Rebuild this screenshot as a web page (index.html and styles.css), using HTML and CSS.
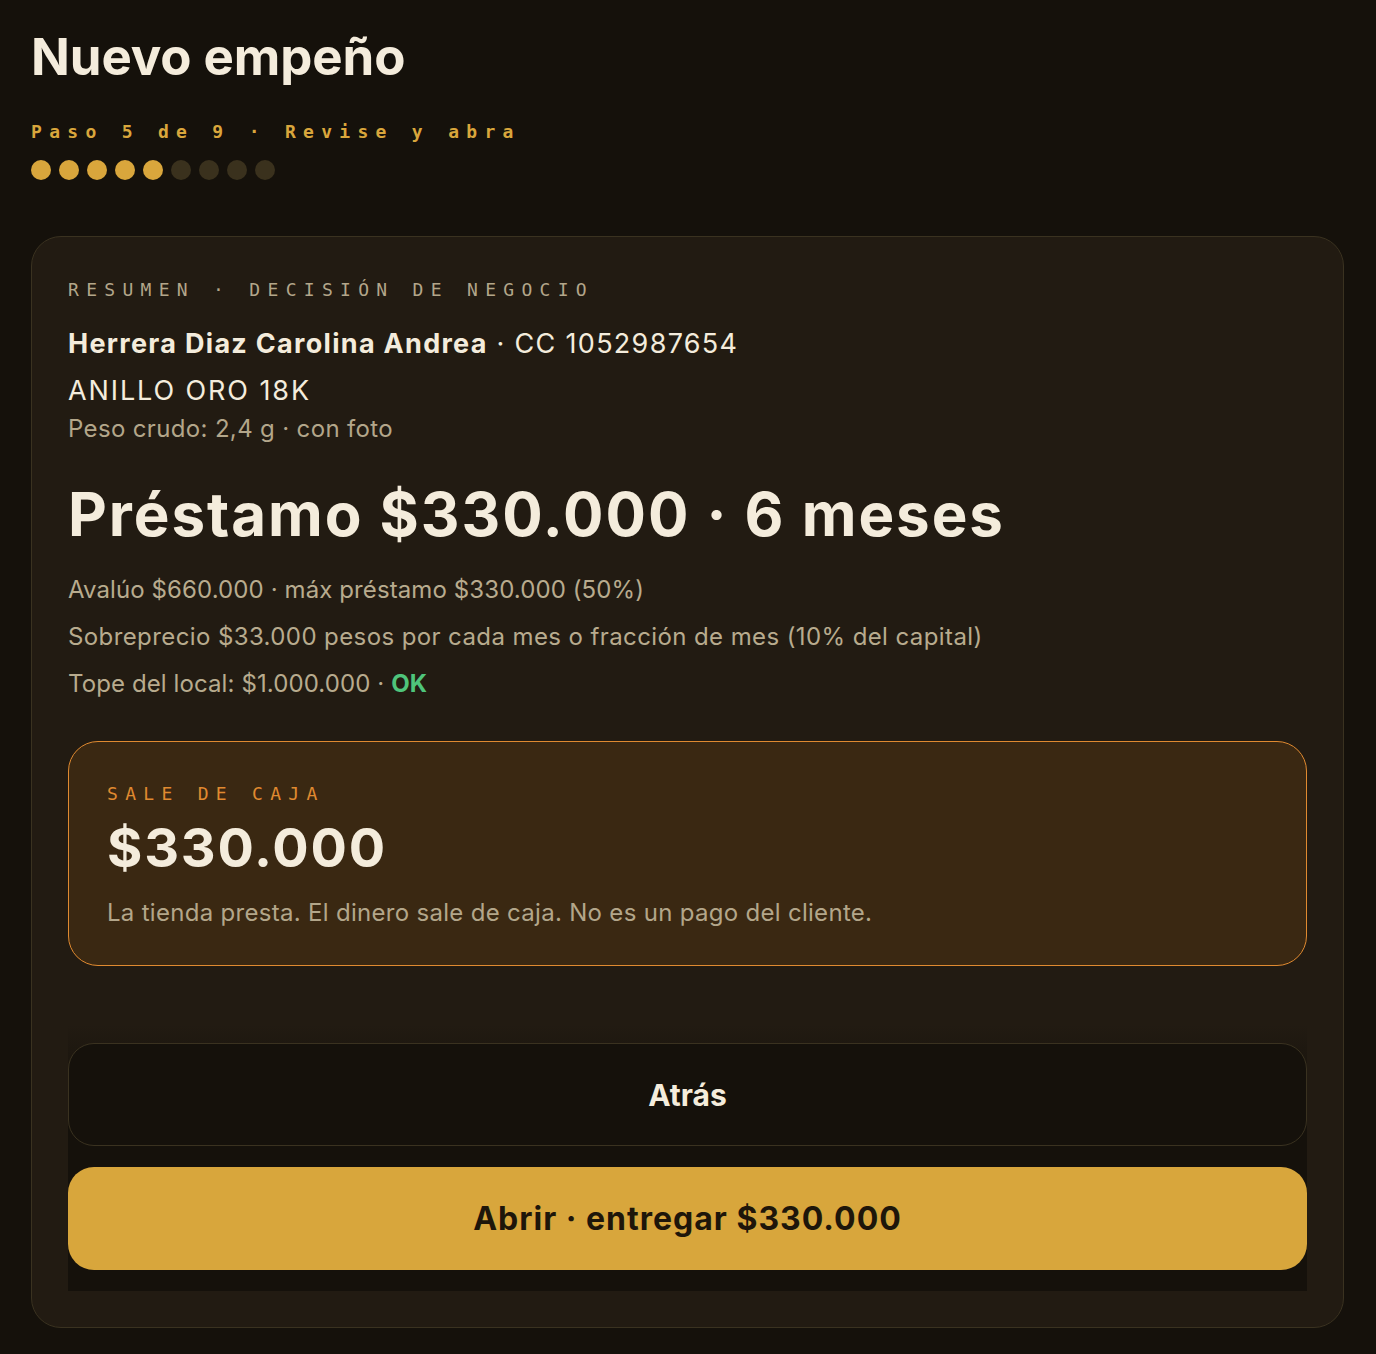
FILE: index.html
```html
<!DOCTYPE html>
<html lang="es">
<head>
<meta charset="utf-8">
<title>Nuevo empeño</title>
<link rel="stylesheet" href="styles.css">
</head>
<body>
<main class="page">
  <h1 class="title">Nuevo empeño</h1>
  <p class="step">Paso 5 de 9 · Revise y abra</p>
  <div class="dots">
    <span class="dot on"></span><span class="dot on"></span><span class="dot on"></span><span class="dot on"></span><span class="dot on"></span><span class="dot"></span><span class="dot"></span><span class="dot"></span><span class="dot"></span>
  </div>

  <section class="card">
    <p class="eyebrow">Resumen · Decisión de negocio</p>
    <p class="client"><strong>Herrera Diaz Carolina Andrea</strong> · CC 1052987654</p>
    <p class="item">ANILLO ORO 18K</p>
    <p class="meta">Peso crudo: 2,4 g · con foto</p>
    <h2 class="loan">Préstamo $330.000 · 6 meses</h2>
    <ul class="facts">
      <li>Avalúo $660.000 · máx préstamo $330.000 (50%)</li>
      <li class="wide">Sobreprecio $33.000 pesos por cada mes o fracción de mes (10% del capital)</li>
      <li>Tope del local: $1.000.000 · <span class="ok">OK</span></li>
    </ul>

    <div class="cash">
      <p class="cash-label">Sale de caja</p>
      <p class="cash-amount">$330.000</p>
      <p class="cash-note">La tienda presta. El dinero sale de caja. No es un pago del cliente.</p>
    </div>

    <div class="actions">
      <button class="btn btn-back" type="button">Atrás</button>
      <button class="btn btn-primary" type="button">Abrir · entregar $330.000</button>
    </div>
  </section>
</main>
</body>
</html>
```

FILE: styles.css
```css
* { box-sizing: border-box; }
html, body {
  margin: 0;
  padding: 0;
  background: #15110b;
}
body {
  font-family: Inter, Roboto, "Liberation Sans", sans-serif;
  color: #f4ecdc;
}
.page {
  padding: 28px 32px 26px 31px;
}
p, h1, h2, ul { margin: 0; padding: 0; }

.title {
  font-size: 51px;
  font-weight: 700;
  letter-spacing: -0.1px;
  line-height: 58px;
  color: #f4ecdc;
}
.step {
  margin-top: 34px;
  font-family: "DejaVu Sans Mono", "Liberation Mono", monospace;
  font-size: 18px;
  font-weight: 700;
  letter-spacing: 7.3px;
  color: #d9a63c;
  line-height: 24px;
}
.dots {
  display: flex;
  gap: 8px;
  margin-top: 16px;
}
.dot {
  width: 20px;
  height: 20px;
  border-radius: 50%;
  background: #3a311d;
}
.dot.on { background: #d9a63c; }

.card {
  margin-top: 56px;
  border: 1px solid #3a3220;
  border-radius: 30px;
  background: #221b12;
  padding: 38px 36px 36px 36px;
}
.eyebrow {
  font-family: "DejaVu Sans Mono", "Liberation Mono", monospace;
  font-size: 18px;
  letter-spacing: 7.3px;
  text-transform: uppercase;
  color: #b3a68a;
  line-height: 30px;
}
.client {
  margin-top: 22px;
  font-size: 27px;
  line-height: 34px;
  letter-spacing: 1.3px;
  color: #f4ecdc;
}
.client strong { font-weight: 700; }
.item {
  margin-top: 13px;
  font-size: 27px;
  line-height: 34px;
  letter-spacing: 1.9px;
}
.meta {
  margin-top: 5px;
  font-size: 24px;
  line-height: 32px;
  letter-spacing: 0.35px;
  color: #b3a68a;
}
.loan {
  margin-top: 27px;
  font-size: 60px;
  font-weight: 700;
  line-height: 84px;
  letter-spacing: 1.95px;
  color: #f4ecdc;
}
.facts {
  list-style: none;
  margin-top: 18px;
  display: flex;
  flex-direction: column;
  gap: 15px;
}
.facts li {
  font-size: 24px;
  line-height: 32px;
  letter-spacing: 0.1px;
  color: #b8ab8e;
}
.facts li.wide { letter-spacing: 0.4px; }
.ok { color: #4fc47b; font-weight: 700; }

.cash {
  margin-top: 41px;
  border: 1.5px solid #e08a30;
  border-radius: 30px;
  background: #3a2812;
  padding: 40px 38px 36px;
}
.cash-label {
  font-family: "DejaVu Sans Mono", "Liberation Mono", monospace;
  font-size: 18px;
  letter-spacing: 7.3px;
  text-transform: uppercase;
  color: #e08a30;
  line-height: 24px;
}
.cash-amount {
  margin-top: 9px;
  font-size: 54px;
  font-weight: 700;
  line-height: 66px;
  letter-spacing: 1.8px;
  color: #f4ecdc;
}
.cash-note {
  margin-top: 16px;
  font-size: 24px;
  line-height: 32px;
  letter-spacing: 0.3px;
  color: #b3a68a;
}

.actions {
  margin-top: 59px;
  padding: 18px 0 21px;
  display: flex;
  flex-direction: column;
  gap: 21px;
  background: linear-gradient(180deg, rgba(21,17,11,0) 0%, #15110b 30%, #15110b 100%);
}
.btn {
  width: 100%;
  height: 103px;
  border-radius: 26px;
  font-family: Inter, Roboto, "Liberation Sans", sans-serif;
  font-weight: 700;
  cursor: pointer;
}
.btn-back {
  border: 1px solid #3a3220;
  background: #15110b;
  color: #f4ecdc;
  font-size: 30px;
}
.btn-primary {
  border: none;
  background: #d8a63c;
  color: #1e160a;
  font-size: 32px;
  letter-spacing: 1px;
}
```
